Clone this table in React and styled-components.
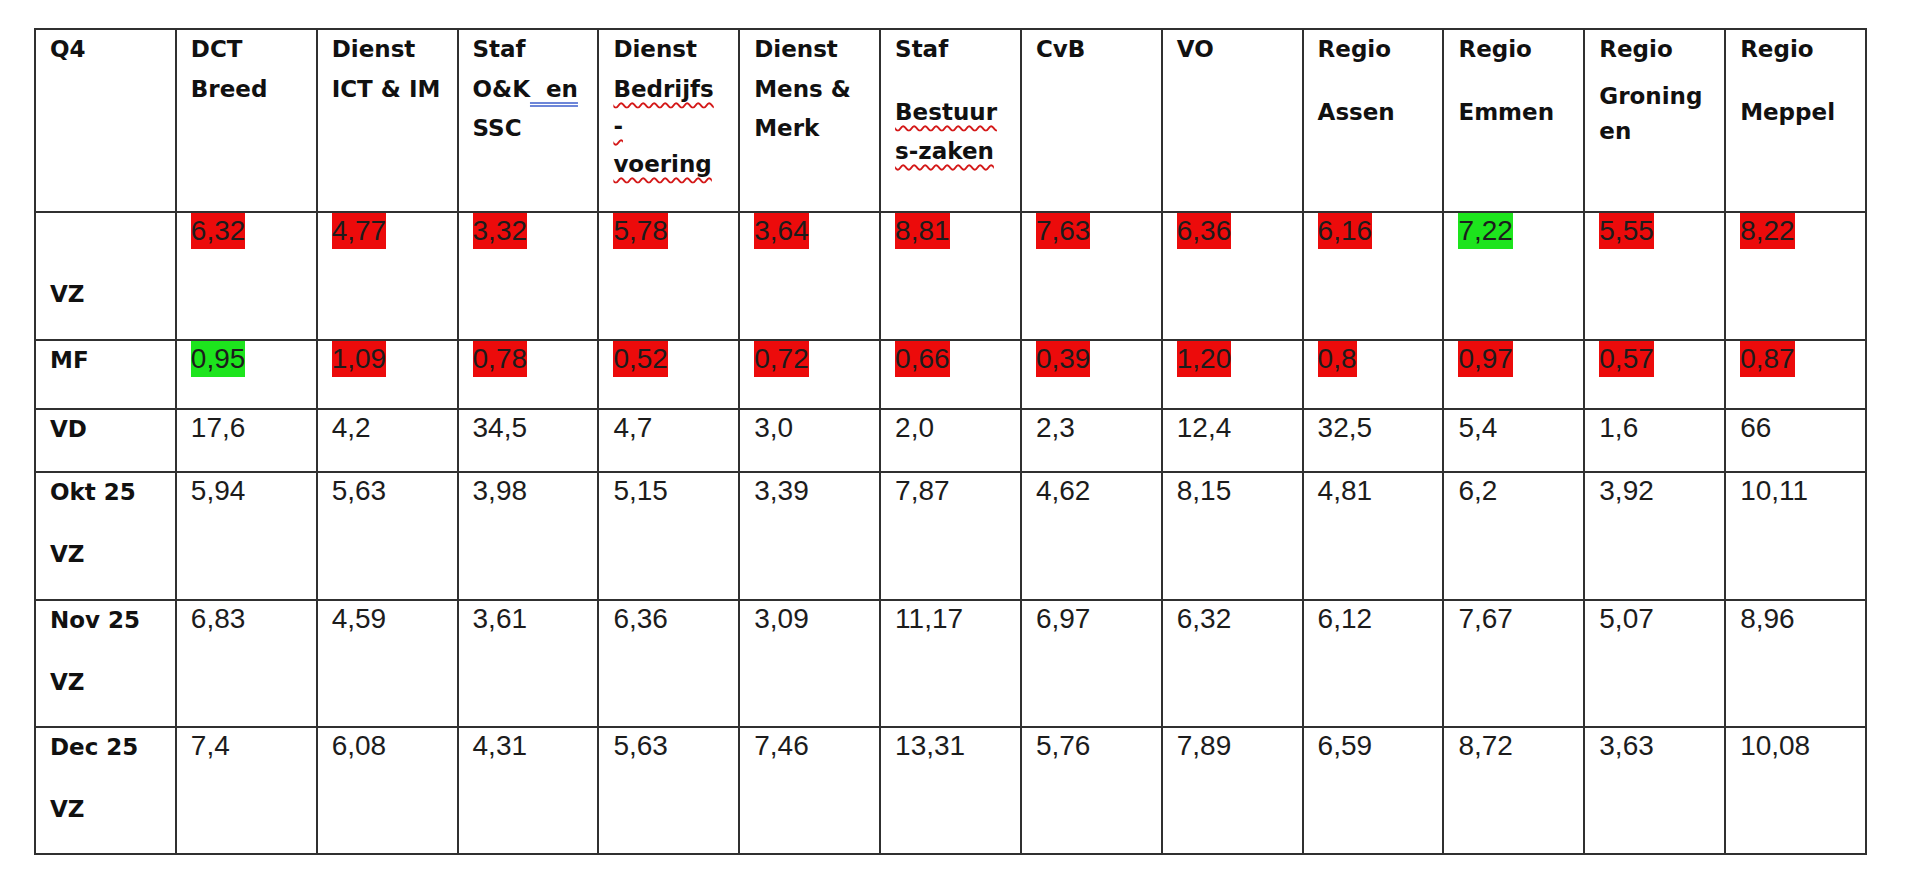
import React from 'react';
import styled, { createGlobalStyle } from 'styled-components';

const GlobalStyle = createGlobalStyle`
  html, body {
    margin: 0;
    padding: 0;
    background: #ffffff;
  }
  body {
    font-family: "DejaVu Sans", "Liberation Sans", sans-serif;
    color: #111111;
  }
`;

const Page = styled.div`
  padding: 28px 0 0 34px;
`;

const Table = styled.table`
  border-collapse: collapse;
  table-layout: fixed;
  width: 1833px;
`;

const Row = styled.tr`
  height: ${props => props.$h}px;
`;

const Cell = styled.td`
  border: 2px solid #303030;
  vertical-align: top;
  padding: 0 4px 0 14px;
  overflow: hidden;
`;

const Line = styled.div`
  font-family: "DejaVu Sans", sans-serif;
  font-weight: bold;
  font-size: 23px;
  line-height: 39.5px;
  color: #111111;
  white-space: nowrap;
  margin-top: ${props => props.$gap || 0}px;
`;

const Spell = styled.span`
  text-decoration: underline wavy #d41818;
  text-decoration-thickness: 1.8px;
  text-underline-offset: 5px;
  text-decoration-skip-ink: none;
`;

const Grammar = styled.span`
  text-decoration: underline double #6d86d8;
  text-decoration-thickness: 1.5px;
  text-underline-offset: 5px;
`;

const marks = {
  r: '#ec0b0b',
  g: '#1de41d',
};

const Num = styled.span`
  display: inline-block;
  font-family: "Liberation Sans", Arial, sans-serif;
  font-size: 28px;
  line-height: 36px;
  color: #1c1c1c;
  background: ${props => marks[props.$mark] || 'transparent'};
`;

// header lines: text, extra paragraph gap, kind of proofing underline
const header = [
  [{ t: 'Q4' }],
  [{ t: 'DCT' }, { t: 'Breed' }],
  [{ t: 'Dienst' }, { t: 'ICT & IM' }],
  [{ t: 'Staf' }, { t: 'O&K', grammar: '\u00a0\u00a0en' }, { t: 'SSC' }],
  [{ t: 'Dienst' }, { t: 'Bedrijfs', spell: true }, { t: '-', spell: true, gap: -2 }, { t: 'voering', spell: true, gap: -2 }],
  [{ t: 'Dienst' }, { t: 'Mens &' }, { t: 'Merk' }],
  [{ t: 'Staf' }, { t: 'Bestuur', spell: true, gap: 23 }, { t: 's-zaken', spell: true }],
  [{ t: 'CvB' }],
  [{ t: 'VO' }],
  [{ t: 'Regio' }, { t: 'Assen', gap: 23 }],
  [{ t: 'Regio' }, { t: 'Emmen', gap: 23 }],
  [{ t: 'Regio' }, { t: 'Groning', gap: 7 }, { t: 'en', gap: -4 }],
  [{ t: 'Regio' }, { t: 'Meppel', gap: 23 }],
];

const rows = [
  {
    label: [null, 'VZ'],
    h: 128,
    values: ['6,32', '4,77', '3,32', '5,78', '3,64', '8,81', '7,63', '6,36', '6,16', '7,22', '5,55', '8,22'],
    marks: 'rrrrrrrrrgrr',
  },
  {
    label: ['MF'],
    h: 69,
    values: ['0,95', '1,09', '0,78', '0,52', '0,72', '0,66', '0,39', '1,20', '0,8', '0,97', '0,57', '0,87'],
    marks: 'grrrrrrrrrrr',
  },
  {
    label: ['VD'],
    h: 63,
    values: ['17,6', '4,2', '34,5', '4,7', '3,0', '2,0', '2,3', '12,4', '32,5', '5,4', '1,6', '66'],
  },
  {
    label: ['Okt 25', 'VZ'],
    h: 128,
    values: ['5,94', '5,63', '3,98', '5,15', '3,39', '7,87', '4,62', '8,15', '4,81', '6,2', '3,92', '10,11'],
  },
  {
    label: ['Nov 25', 'VZ'],
    h: 127,
    values: ['6,83', '4,59', '3,61', '6,36', '3,09', '11,17', '6,97', '6,32', '6,12', '7,67', '5,07', '8,96'],
  },
  {
    label: ['Dec 25', 'VZ'],
    h: 127,
    values: ['7,4', '6,08', '4,31', '5,63', '7,46', '13,31', '5,76', '7,89', '6,59', '8,72', '3,63', '10,08'],
  },
];

const HeaderCell = ({ lines }) => (
  <Cell>
    {lines.map((l, i) => (
      <Line key={i} $gap={l.gap}>
        {l.spell ? <Spell>{l.t}</Spell> : l.t}
        {l.grammar && <Grammar>{l.grammar}</Grammar>}
      </Line>
    ))}
  </Cell>
);

const LabelCell = ({ label }) => (
  <Cell>
    {label.map((t, i) => (
      <Line key={i} $gap={i > 0 ? 22 : 0}>{t || '\u00a0'}</Line>
    ))}
  </Cell>
);

export default function App() {
  return (
    <>
      <GlobalStyle />
      <Page>
        <Table>
          <tbody>
            <Row $h={183}>
              {header.map((lines, i) => <HeaderCell key={i} lines={lines} />)}
            </Row>
            {rows.map((row, r) => (
              <Row key={r} $h={row.h}>
                <LabelCell label={row.label} />
                {row.values.map((v, i) => (
                  <Cell key={i}>
                    <Num $mark={row.marks && row.marks[i]}>{v}</Num>
                  </Cell>
                ))}
              </Row>
            ))}
          </tbody>
        </Table>
      </Page>
    </>
  );
}
